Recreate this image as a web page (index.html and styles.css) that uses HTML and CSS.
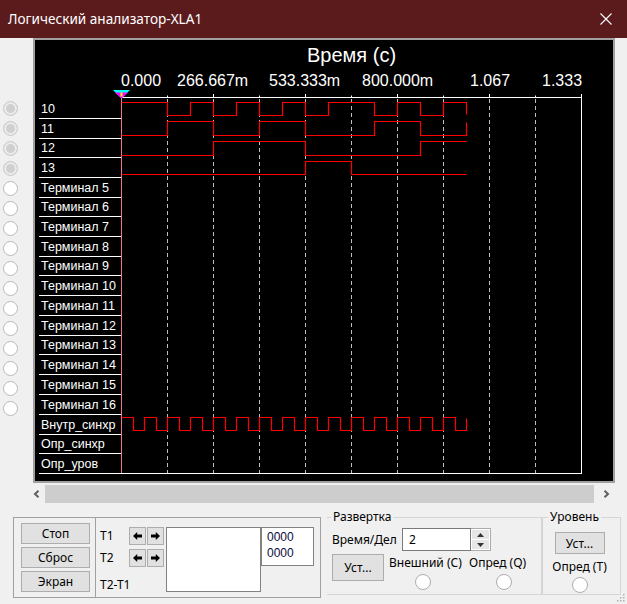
FILE: index.html
```html
<!DOCTYPE html>
<html lang="ru">
<head>
<meta charset="utf-8">
<title>Логический анализатор-XLA1</title>
<link rel="stylesheet" href="styles.css">
</head>
<body>
<div class="window">
  <header class="titlebar">
    <span class="title">Логический анализатор-XLA1</span>
    <svg class="close" width="12" height="12" viewBox="0 0 12 12"><path d="M0.5 0.5L11.5 11.5M11.5 0.5L0.5 11.5" stroke="#fff" stroke-width="1.1" fill="none"/></svg>
  </header>

  <div class="display">
    <div class="radios">
      <span class="radio dim"></span><span class="radio dim"></span><span class="radio dim"></span><span class="radio dim"></span>
      <span class="radio"></span><span class="radio"></span><span class="radio"></span><span class="radio"></span>
      <span class="radio"></span><span class="radio"></span><span class="radio"></span><span class="radio"></span>
      <span class="radio"></span><span class="radio"></span><span class="radio"></span><span class="radio"></span>
    </div>
    <div class="scope">
      <svg class="plot" width="578" height="441" viewBox="0 0 578 441">
        <g transform="translate(-35 -40)">
          <text class="ttl" x="307" y="61.5">Время (с)</text>
          <g class="tlab">
            <text x="121" y="86">0.000</text>
            <text x="177" y="86">266.667m</text>
            <text x="269" y="86">533.333m</text>
            <text x="362" y="86">800.000m</text>
            <text x="470" y="86">1.067</text>
            <text x="542" y="86">1.333</text>
          </g>
          <g class="dash">
            <line x1="167.5" y1="99" x2="167.5" y2="473"/>
            <line x1="213.5" y1="99" x2="213.5" y2="473"/>
            <line x1="259.5" y1="99" x2="259.5" y2="473"/>
            <line x1="305.5" y1="99" x2="305.5" y2="473"/>
            <line x1="351.5" y1="99" x2="351.5" y2="473"/>
            <line x1="397.5" y1="99" x2="397.5" y2="473"/>
            <line x1="443.5" y1="99" x2="443.5" y2="473"/>
            <line x1="489.5" y1="99" x2="489.5" y2="473"/>
            <line x1="535.5" y1="99" x2="535.5" y2="473"/>
          </g>
          <g class="wl">
            <line x1="121" y1="97.5" x2="582" y2="97.5"/>
            <line x1="581.5" y1="97" x2="581.5" y2="474"/>
            <line x1="39" y1="473.5" x2="582" y2="473.5"/>
            <line x1="121.5" y1="94" x2="121.5" y2="97"/>
            <line x1="167.5" y1="95.5" x2="167.5" y2="97"/>
            <line x1="213.5" y1="94" x2="213.5" y2="97"/>
            <line x1="259.5" y1="95.5" x2="259.5" y2="97"/>
            <line x1="305.5" y1="94" x2="305.5" y2="97"/>
            <line x1="351.5" y1="95.5" x2="351.5" y2="97"/>
            <line x1="397.5" y1="94" x2="397.5" y2="97"/>
            <line x1="443.5" y1="95.5" x2="443.5" y2="97"/>
            <line x1="489.5" y1="94" x2="489.5" y2="97"/>
            <line x1="535.5" y1="95.5" x2="535.5" y2="97"/>
            <line x1="581.5" y1="94" x2="581.5" y2="97"/>
            <line x1="39" y1="118.5" x2="121" y2="118.5"/>
            <line x1="39" y1="138.5" x2="121" y2="138.5"/>
            <line x1="39" y1="157.5" x2="121" y2="157.5"/>
            <line x1="39" y1="177.5" x2="121" y2="177.5"/>
            <line x1="39" y1="197.5" x2="121" y2="197.5"/>
            <line x1="39" y1="216.5" x2="121" y2="216.5"/>
            <line x1="39" y1="236.5" x2="121" y2="236.5"/>
            <line x1="39" y1="256.5" x2="121" y2="256.5"/>
            <line x1="39" y1="275.5" x2="121" y2="275.5"/>
            <line x1="39" y1="295.5" x2="121" y2="295.5"/>
            <line x1="39" y1="315.5" x2="121" y2="315.5"/>
            <line x1="39" y1="335.5" x2="121" y2="335.5"/>
            <line x1="39" y1="354.5" x2="121" y2="354.5"/>
            <line x1="39" y1="374.5" x2="121" y2="374.5"/>
            <line x1="39" y1="394.5" x2="121" y2="394.5"/>
            <line x1="39" y1="414.5" x2="121" y2="414.5"/>
            <line x1="39" y1="434.5" x2="121" y2="434.5"/>
            <line x1="39" y1="453.5" x2="121" y2="453.5"/>
          </g>
          <g class="rlab">
            <text x="41" y="112.5">10</text>
            <text x="41" y="132.5">11</text>
            <text x="41" y="151.5">12</text>
            <text x="41" y="171.5">13</text>
            <text x="41" y="191.5">Терминал 5</text>
            <text x="41" y="210.5">Терминал 6</text>
            <text x="41" y="230.5">Терминал 7</text>
            <text x="41" y="250.5">Терминал 8</text>
            <text x="41" y="269.5">Терминал 9</text>
            <text x="41" y="289.5">Терминал 10</text>
            <text x="41" y="309.5">Терминал 11</text>
            <text x="41" y="329.5">Терминал 12</text>
            <text x="41" y="348.5">Терминал 13</text>
            <text x="41" y="368.5">Терминал 14</text>
            <text x="41" y="388.5">Терминал 15</text>
            <text x="41" y="408.5">Терминал 16</text>
            <text x="41" y="428.5">Внутр_синхр</text>
            <text x="41" y="447.5">Опр_синхр</text>
            <text x="41" y="467.5">Опр_уров</text>
          </g>
          <line class="pink" x1="121.5" y1="98" x2="121.5" y2="473"/>
          <g class="wave">
            <path d="M121.5 102.5H167.5V115.5H190.5V102.5H213.5V115.5H236.5V102.5H259.5V115.5H282.5V102.5H305.5V115.5H328.5V102.5H374.5V115.5H397.5V102.5H420.5V115.5H443.5V102.5H466.5V114.5"/>
            <path d="M121.5 135.5H167.5V121.5H213.5V135.5H259.5V121.5H305.5V135.5H374.5V121.5H420.5V135.5H466.5V122.5"/>
            <path d="M121.5 155.5H213.5V141.5H305.5V155.5H420.5V141.5H466.5"/>
            <path d="M121.5 174.5H305.5V161.5H351.5V174.5H466.5"/>
            <path d="M121.5 417.5H133.5V430.5H144.5V417.5H156.5V430.5H167.5V417.5H179.5V430.5H190.5V417.5H202.5V430.5H213.5V417.5H225.5V430.5H236.5V417.5H248.5V430.5H259.5V417.5H271.5V430.5H282.5V417.5H294.5V430.5H305.5V417.5H317.5V430.5H328.5V417.5H340.5V430.5H351.5V417.5H363.5V430.5H374.5V417.5H386.5V430.5H397.5V417.5H409.5V430.5H420.5V417.5H432.5V430.5H443.5V417.5H455.5V430.5H466.5V418.5"/>
          </g>
          <polygon points="113,90 130,90 121.5,98.5" fill="#00ffff"/>
          <polygon points="115,92.5 128,92.5 121.5,98.5" fill="#ff00ff"/>
          <rect x="120.5" y="92.5" width="2" height="4" fill="#ffff00"/>
        </g>
      </svg>
    </div>
  </div>

  <div class="hscroll">
    <span class="sb-btn"><svg width="7" height="8" viewBox="0 0 7 8"><path d="M5.5 0.8L2 4L5.5 7.2" stroke="#606060" stroke-width="2" fill="none"/></svg></span>
    <span class="sb-thumb"></span>
    <span class="sb-btn"><svg width="7" height="8" viewBox="0 0 7 8"><path d="M1.5 0.8L5 4L1.5 7.2" stroke="#606060" stroke-width="2" fill="none"/></svg></span>
  </div>

  <div class="controls">
    <div class="box">
      <div class="btncol">
        <button class="btn wide">Стоп</button>
        <button class="btn wide">Сброс</button>
        <button class="btn wide">Экран</button>
      </div>
      <div class="cursors">
        <div class="curgrid">
          <span class="clabel">T1</span>
          <span class="arrows">
            <span class="arrbtn"><svg width="9" height="8" viewBox="0 0 9 8"><path d="M0 4L4.2 0V2.4H9V5.6H4.2V8Z"/></svg></span>
            <span class="arrbtn"><svg width="9" height="8" viewBox="0 0 9 8"><path d="M9 4L4.8 0V2.4H0V5.6H4.8V8Z"/></svg></span>
          </span>
          <span class="clabel">T2</span>
          <span class="arrows">
            <span class="arrbtn"><svg width="9" height="8" viewBox="0 0 9 8"><path d="M0 4L4.2 0V2.4H9V5.6H4.2V8Z"/></svg></span>
            <span class="arrbtn"><svg width="9" height="8" viewBox="0 0 9 8"><path d="M9 4L4.8 0V2.4H0V5.6H4.8V8Z"/></svg></span>
          </span>
          <span class="clabel diff">T2-T1</span>
        </div>
        <div class="tbox"></div>
        <div class="vbox">0000<br>0000</div>
      </div>
    </div>

    <fieldset class="sweep">
      <legend>Развертка</legend>
      <div class="row1">
        <span class="lbl-dt">Время/Дел</span>
        <span class="input">2</span>
        <span class="spin">
          <span class="spin-half"><svg width="7" height="4" viewBox="0 0 7 4"><path d="M0 4L3.5 0L7 4Z"/></svg></span>
          <span class="spin-half"><svg width="7" height="4" viewBox="0 0 7 4"><path d="M0 0L3.5 4L7 0Z"/></svg></span>
        </span>
      </div>
      <div class="row2">
        <button class="btn ust">Уст...</button>
        <div class="opt opt1">
          <span class="otext">Внешний (С)</span>
          <span class="radio big r1"></span>
        </div>
        <div class="opt opt2">
          <span class="otext">Опред (Q)</span>
          <span class="radio big r2"></span>
        </div>
      </div>
    </fieldset>

    <fieldset class="level">
      <legend>Уровень</legend>
      <div class="lvl">
        <button class="btn ust2">Уст...</button>
        <span class="otext lt">Опред (T)</span>
        <span class="radio big lr"></span>
      </div>
    </fieldset>
  </div>

  <svg class="grip" width="9" height="9" viewBox="0 0 9 9">
    <rect x="7" y="1" width="1.5" height="1.5"/><rect x="4" y="4" width="1.5" height="1.5"/><rect x="7" y="4" width="1.5" height="1.5"/>
    <rect x="1" y="7" width="1.5" height="1.5"/><rect x="4" y="7" width="1.5" height="1.5"/><rect x="7" y="7" width="1.5" height="1.5"/>
  </svg>
</div>
</body>
</html>
```

FILE: styles.css
```css
* { box-sizing: border-box; }
html, body { margin: 0; padding: 0; }
body {
  width: 627px;
  height: 604px;
  overflow: hidden;
  background: #f0f0f0;
  font-family: "Noto Sans", "Liberation Sans", sans-serif;
  font-size: 12px;
  color: #000;
}
.window { position: relative; width: 627px; height: 604px; }

.titlebar {
  height: 38px;
  background: #5b1b1d;
  display: flex;
  align-items: center;
  padding: 0 15px 0 8px;
  color: #fff;
}
.title { font-size: 13.6px; line-height: 20px; }
.close { margin-left: auto; display: block; }

.display { display: flex; height: 445px; }
.radios {
  width: 33px;
  padding: 62.5px 0 0 3px;
  display: flex;
  flex-direction: column;
  gap: 5px;
}
.radio {
  display: block;
  width: 15px;
  height: 15px;
  border-radius: 50%;
  border: 1px solid #b9b9b9;
  background: #fff;
}
.radio.dim {
  border-color: #cccccc;
  background: #d0d0d0;
  box-shadow: inset 0 0 0 2px #ececec;
}
.radio.big { width: 16px; height: 16px; border-color: #adadad; }

.scope {
  width: 582px;
  height: 445px;
  border: 2px solid #a0a0a0;
  background: #000;
}
.plot { display: block; }
.ttl { font-family: "Liberation Sans", Arial, sans-serif; font-size: 20px; fill: #fff; }
.tlab text { font-family: "Liberation Sans", Arial, sans-serif; font-size: 16px; fill: #fff; }
.rlab text { font-family: "Liberation Sans", Arial, sans-serif; font-size: 12.5px; fill: #fff; }
.dash line { stroke: #bdbdbd; stroke-width: 1; stroke-dasharray: 4 3; }
.wl line { stroke: #fff; stroke-width: 1; }
.pink { stroke: #f07890; stroke-width: 1; }
.wave path { stroke: #ff0000; stroke-width: 1.2; fill: none; }

.hscroll {
  display: flex;
  margin: 2px 0 0 27px;
  width: 588px;
  height: 18px;
}
.sb-btn { width: 18px; display: flex; align-items: center; justify-content: center; }
.sb-thumb { flex: 1; background: #cdcdcd; margin-right: 3px; }

.controls {
  display: flex;
  align-items: flex-start;
  margin-top: 6px;
  padding-left: 13px;
}
.box {
  margin-top: 8px;
  width: 308px;
  height: 81px;
  border: 1px solid #a0a0a0;
  display: flex;
}
.btncol {
  width: 82px;
  border-right: 1px solid #a0a0a0;
  padding: 5px 0 0 7px;
  display: flex;
  flex-direction: column;
  gap: 3px;
}
.btn {
  font-family: "Noto Sans", "Liberation Sans", sans-serif;
  font-size: 12px;
  color: #000;
  background: #e1e1e1;
  border: 1px solid #adadad;
  padding: 0;
  margin: 0;
}
.btn.wide { width: 69px; height: 21px; line-height: 18px; }

.cursors { display: flex; align-items: flex-start; padding: 9px 0 0 4px; }
.curgrid {
  display: grid;
  grid-template-columns: 29px 36px;
  grid-template-rows: 18px 18px 18px;
  row-gap: 4px;
}
.clabel { line-height: 18px; white-space: nowrap; }
.clabel.diff { margin-top: 5px; grid-column: 1 / span 2; }
.arrows { display: flex; gap: 1px; }
.arrbtn {
  width: 17px;
  height: 18px;
  background: #e1e1e1;
  border: 1px solid #adadad;
  display: flex;
  align-items: center;
  justify-content: center;
}
.tbox {
  width: 95px;
  height: 65px;
  margin-left: 1px;
  background: #fff;
  border: 1px solid #828282;
}
.vbox {
  width: 53px;
  height: 39px;
  background: #fff;
  border: 1px solid #828282;
  padding: 2px 0 0 5px;
  font-family: "Liberation Sans", Arial, sans-serif;
  font-size: 12px;
  line-height: 15.5px;
  color: #0b0b3d;
}

fieldset {
  margin: 0;
  padding: 0;
  border: 1px solid #d5d5d5;
  height: 86px;
}
legend {
  padding: 0 2px;
  line-height: 16px;
  font-size: 12px;
}
.sweep { width: 215px; margin-left: 6px; border-left: none; }
.sweep legend { margin-left: 4px; }
.row1 {
  display: flex;
  align-items: center;
  margin: 3px 0 0 5px;
  height: 23px;
}
.lbl-dt { width: 70px; }
.input {
  width: 69px;
  height: 23px;
  background: #fff;
  border: 1px solid #7a7a7a;
  padding-left: 6px;
  line-height: 21px;
}
.spin {
  width: 20px;
  height: 23px;
  display: flex;
  flex-direction: column;
  border: 1px solid #acacac;
  border-left: none;
  background: #fff;
  padding: 1px;
  gap: 1px;
}
.spin-half {
  flex: 1;
  background: #e6e6e6;
  display: flex;
  align-items: center;
  justify-content: center;
}
.spin-half svg path { fill: #333; }
.row2 { display: flex; align-items: flex-start; margin: 3px 0 0 5px; }
.ust { width: 52px; height: 27px; }
.opt { display: flex; flex-direction: column; align-items: flex-start; }
.opt1 { width: 80px; margin-left: 5px; }
.otext { line-height: 16px; margin-top: 1px; white-space: nowrap; }
.r1 { margin: 3px 0 0 26px; }
.r2 { margin: 3px 0 0 27px; }

.level { width: 79px; }
.level legend { margin-left: 5px; }
.lvl { display: flex; flex-direction: column; align-items: center; padding-right: 4px; }
.ust2 { width: 50px; height: 22px; margin-top: 7px; }
.lt { margin-top: 5px; }
.lr { margin-top: 2px; }

.grip { position: absolute; right: 2px; bottom: 2px; fill: #b0b0b0; }
```
